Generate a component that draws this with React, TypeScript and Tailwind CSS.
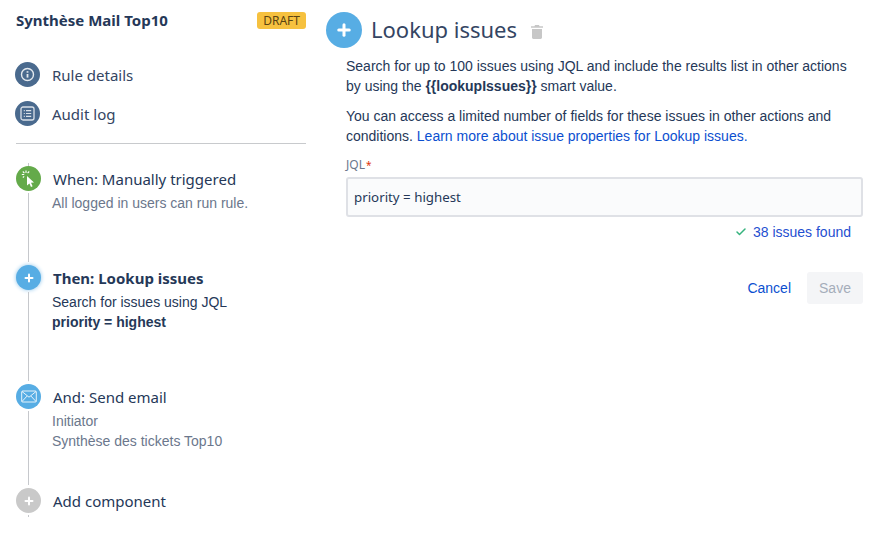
import { Check, Plus } from "lucide-react";
import type { ReactNode } from "react";

const heading = "font-['Noto_Sans','Open_Sans',sans-serif]";
const body = "font-['Liberation_Sans',Arial,sans-serif]";

function InfoIcon() {
  return (
    <svg width="15" height="15" viewBox="0 0 15 15" fill="none" stroke="white" strokeOpacity="0.85">
      <circle cx="7.5" cy="7.5" r="6" strokeWidth="1.4" />
      <path d="M7.5 7v3.6" strokeWidth="1.8" />
      <path d="M7.5 4.2v1.5" strokeWidth="1.8" />
    </svg>
  );
}

function LogIcon() {
  return (
    <svg width="15" height="15" viewBox="0 0 15 15" fill="none" stroke="white" strokeOpacity="0.8">
      <rect x="1" y="1" width="13" height="13" rx="2" strokeWidth="1.3" />
      <path d="M3.8 4.6h1M6 4.6h5.2M3.8 7.5h1M6 7.5h5.2M3.8 10.4h1M6 10.4h5.2" strokeWidth="1.2" />
    </svg>
  );
}

function ClickIcon() {
  return (
    <svg width="19" height="19" viewBox="0 0 19 19" fill="none">
      <path d="M8 7v9.5l2.4-1.9L12 18l1.6-.8-1.6-3.4 3-.3z" fill="white" />
      <path d="M7 1.5v2.4M2.8 5.5h2.4M3.8 2.5l1.6 1.6M10.2 2.5 8.6 4.1M3.8 8.5l1.4-1.2" stroke="white" strokeWidth="1.1" />
    </svg>
  );
}

function MailIcon() {
  return (
    <svg width="16" height="13" viewBox="0 0 16 13" fill="none" stroke="white" strokeOpacity="0.85" strokeWidth="1">
      <rect x="0.7" y="1" width="14.6" height="11" rx="1" />
      <path d="M1 1.5 8 7.2l7-5.7M1 11.5l5-5.4M15 11.5l-5-5.4" />
    </svg>
  );
}

function TrashIcon() {
  return (
    <svg width="12" height="14" viewBox="0 0 12 14" fill="#c7c7c7" className="ml-[14px] mt-[3px]">
      <path d="M4 0h4l.5 1.2H12v1.6H0V1.2h3.5z" />
      <path d="M1 4h10v8.6c0 .8-.6 1.4-1.4 1.4H2.4C1.6 14 1 13.4 1 12.6z" />
    </svg>
  );
}

function NavItem({ icon, label, className }: { icon: ReactNode; label: string; className?: string }) {
  return (
    <div className={`flex items-center gap-3 ${className ?? ""}`}>
      <div className="flex h-[25px] w-[25px] items-center justify-center rounded-full bg-[#4a6a8e]">{icon}</div>
      <span className={`${heading} h-[25px] pt-[1px] text-[15px] leading-[25px] text-[#344563]`}>{label}</span>
    </div>
  );
}

function Step({
  icon,
  color,
  title,
  bold,
  height,
  last,
  glow,
  children,
}: {
  icon: ReactNode;
  color: string;
  title: string;
  bold?: boolean;
  height: string;
  last?: boolean;
  glow?: boolean;
  children?: ReactNode;
}) {
  return (
    <div className={`flex gap-3 ${height}`}>
      <div className="flex w-[25px] shrink-0 flex-col items-center">
        <div className={`flex h-[25px] w-[25px] shrink-0 items-center justify-center rounded-full text-white ${color} ${glow ? "shadow-[0_0_4px_#8cc4ea]" : ""}`}>
          {icon}
        </div>
        <div className={`mt-[2px] w-[1px] bg-[#c6c8cc] ${last ? "h-[2px]" : "mb-[3px] flex-1"}`} />
      </div>
      <div className="min-w-0">
        <div className={`${heading} text-[15px] leading-[26px] text-[#253858] ${bold ? "font-bold" : ""}`}>{title}</div>
        <div className={`${body} mt-[1px] -ml-[1px] text-[14px] leading-[20px]`}>{children}</div>
      </div>
    </div>
  );
}

export default function App() {
  return (
    <div className="flex h-[543px] w-[892px] overflow-hidden bg-white">
      <aside className="ml-[15px] w-[291px] shrink-0">
        <div className="flex items-center justify-between pt-[12px] pl-[1px]">
          <h1 className={`${heading} text-[15px] leading-[17px] font-bold text-[#253858]`}>Synthèse Mail Top10</h1>
          <span className={`${heading} rounded-[3px] bg-[#f6c13f] px-[6px] text-[12px] leading-[17px] text-[#5a4312]`}>DRAFT</span>
        </div>
        <NavItem className="mt-[33px]" label="Rule details" icon={<InfoIcon />} />
        <NavItem className="mt-[14px]" label="Audit log" icon={<LogIcon />} />
        <div className="mt-[17px] ml-[1px] h-[1px] bg-[#c8cacd]" />
        <div className="mt-[19px] ml-[13px] h-[3px] w-[1px] bg-[#c6c8cc]" />
        <div className="ml-[1px]">
          <Step height="h-[99px]" color="bg-[#64aa4a]" title="When: Manually triggered" icon={<ClickIcon />}>
            <p className="text-[#6b778c]">All logged in users can run rule.</p>
          </Step>
          <Step height="h-[119px]" color="bg-[#57ade4]" glow bold title="Then: Lookup issues" icon={<Plus size={12} strokeWidth={4} />}>
            <p className="text-[#253858]">Search for issues using JQL</p>
            <p className="font-bold text-[#253858]">priority = highest</p>
          </Step>
          <Step height="h-[104px]" color="bg-[#57ade4]" title="And: Send email" icon={<MailIcon />}>
            <p className="text-[#6b778c]">Initiator</p>
            <p className="text-[#6b778c]">Synthèse des tickets Top10</p>
          </Step>
          <Step last height="h-[30px]" color="bg-[#c9c9c9]" title="Add component" icon={<Plus size={12} strokeWidth={4} />} />
        </div>
      </aside>

      <main className="ml-[20px] w-[537px] shrink-0 pt-[10px]">
        <div className="flex items-center">
          <div className="flex h-[36px] w-[36px] items-center justify-center rounded-full bg-[#57ade4] text-white">
            <Plus size={18} strokeWidth={4} />
          </div>
          <h2 className={`${heading} ml-[9px] pb-[2px] text-[22px] leading-[38px] text-[#344563]`}>Lookup issues</h2>
          <TrashIcon />
        </div>
        <div className={`${body} ml-[20px] text-[14px] leading-[20px] text-[#253858]`}>
          <p className="mt-[6px]">
            Search for up to 100 issues using JQL and include the results list in other actions
            <br />
            by using the <b>{"{{lookupIssues}}"}</b> smart value.
          </p>
          <p className="mt-[10px]">
            You can access a limited number of fields for these issues in other actions and
            <br />
            conditions. <span className="text-[#0b4fd0]">Learn more about issue properties for Lookup issues.</span>
          </p>
          <label className={`${heading} mt-[10px] block text-[12px] leading-[18px] text-[#6b778c]`}>
            JQL<span className="ml-[1px] text-[10px] text-[#de350b]">*</span>
          </label>
          <div className={`${heading} mt-[3px] flex h-[40px] items-center rounded-[3px] border-2 border-[#dfe1e6] bg-[#fafbfc] px-[6px] text-[13.3px] text-[#253858]`}>
            priority = highest
          </div>
          <div className="mt-[5px] flex items-center justify-end gap-[6px] pr-[12px] text-[#1f4fd0]">
            <Check size={12} strokeWidth={3} className="text-[#36b37e]" />
            <span>38 issues found</span>
          </div>
          <div className="mt-[30px] flex items-center justify-end gap-[16px]">
            <span className="text-[#0b4fd0]">Cancel</span>
            <button className="h-[32px] w-[56px] rounded-[3px] bg-[#f4f5f7] text-[14px] text-[#a5adba]">Save</button>
          </div>
        </div>
      </main>
    </div>
  );
}
